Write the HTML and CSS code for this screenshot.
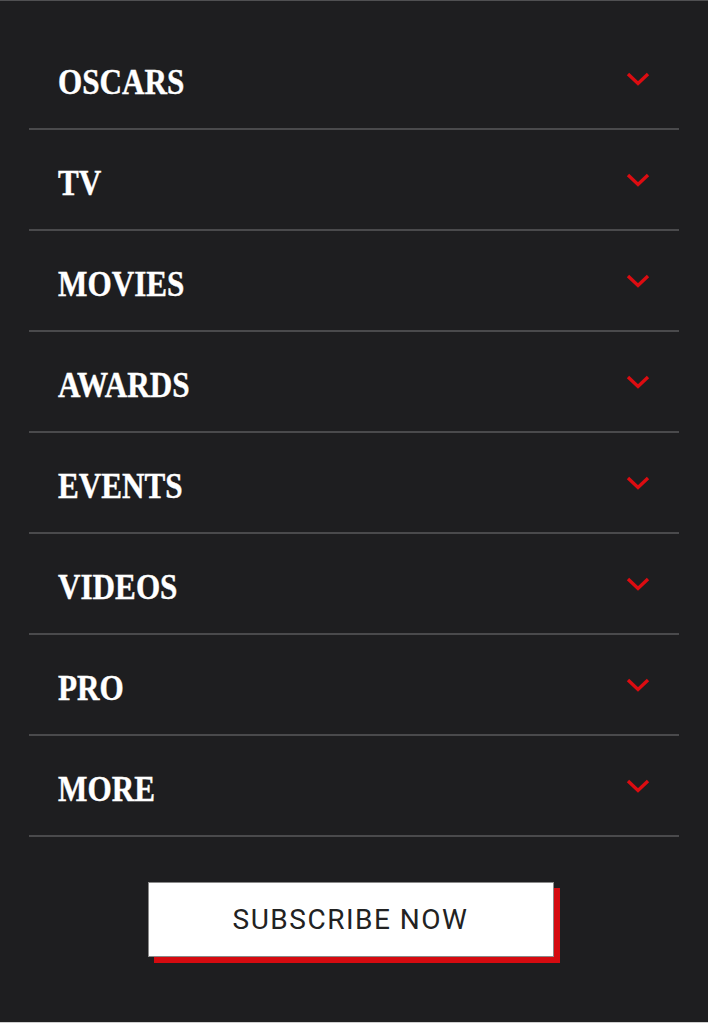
FILE: index.html
```html
<!DOCTYPE html>
<html lang="en">
<head>
<meta charset="utf-8">
<title>Menu</title>
<link rel="stylesheet" href="styles.css">
</head>
<body>
<div class="page">
  <nav class="menu">
    <ul class="menu-list">
      <li class="menu-item"><span class="menu-label">OSCARS</span><svg class="chev" viewBox="0 0 24 14" aria-hidden="true"><path d="M2 2 L12 11.5 L22 2"/></svg></li>
      <li class="menu-item"><span class="menu-label">TV</span><svg class="chev" viewBox="0 0 24 14" aria-hidden="true"><path d="M2 2 L12 11.5 L22 2"/></svg></li>
      <li class="menu-item"><span class="menu-label">MOVIES</span><svg class="chev" viewBox="0 0 24 14" aria-hidden="true"><path d="M2 2 L12 11.5 L22 2"/></svg></li>
      <li class="menu-item"><span class="menu-label">AWARDS</span><svg class="chev" viewBox="0 0 24 14" aria-hidden="true"><path d="M2 2 L12 11.5 L22 2"/></svg></li>
      <li class="menu-item"><span class="menu-label">EVENTS</span><svg class="chev" viewBox="0 0 24 14" aria-hidden="true"><path d="M2 2 L12 11.5 L22 2"/></svg></li>
      <li class="menu-item"><span class="menu-label">VIDEOS</span><svg class="chev" viewBox="0 0 24 14" aria-hidden="true"><path d="M2 2 L12 11.5 L22 2"/></svg></li>
      <li class="menu-item"><span class="menu-label">PRO</span><svg class="chev" viewBox="0 0 24 14" aria-hidden="true"><path d="M2 2 L12 11.5 L22 2"/></svg></li>
      <li class="menu-item"><span class="menu-label">MORE</span><svg class="chev" viewBox="0 0 24 14" aria-hidden="true"><path d="M2 2 L12 11.5 L22 2"/></svg></li>
    </ul>
  </nav>
  <div class="cta">
    <a class="subscribe" href="#">SUBSCRIBE NOW</a>
  </div>
</div>
</body>
</html>
```
FILE: styles.css
```css
* { box-sizing: border-box; }
html, body { margin: 0; padding: 0; }
body { background: #1e1e20; }
.page {
  min-height: 1023px;
  background: #1e1e20;
  border-top: 1px solid #505052;
  border-bottom: 1px solid #cfcfcf;
  padding: 28px 29px 0;
}
.menu-list {
  list-style: none;
  margin: 0;
  padding: 0;
}
.menu-item {
  height: 101px;
  border-bottom: 2px solid #4a4a4c;
  display: flex;
  align-items: center;
  justify-content: space-between;
  padding: 0 29px 0 29px;
}
.menu-label {
  display: inline-block;
  font-family: "Liberation Serif", "Times New Roman", serif;
  font-weight: 700;
  font-size: 35px;
  letter-spacing: 0;
  color: #ffffff;
  line-height: 1;
  padding-top: 7px;
  transform: scaleX(0.89);
  transform-origin: left center;
  -webkit-text-stroke: 0.4px #ffffff;
}
.chev {
  width: 24px;
  height: 14px;
  fill: none;
  stroke: #dc0c11;
  stroke-width: 3.4;
}
.cta {
  display: flex;
  justify-content: center;
  padding-top: 45px;
}
.subscribe {
  display: flex;
  align-items: center;
  justify-content: center;
  width: 406px;
  height: 75px;
  margin-right: 7px;
  background: #ffffff;
  border: 1px solid #8a8a8a;
  box-shadow: 6px 6px 0 #d50b10;
  color: #222222;
  text-decoration: none;
  font-family: "Roboto", "Liberation Sans", sans-serif;
  font-weight: 400;
  font-size: 28px;
  letter-spacing: 1.5px;
}
```
